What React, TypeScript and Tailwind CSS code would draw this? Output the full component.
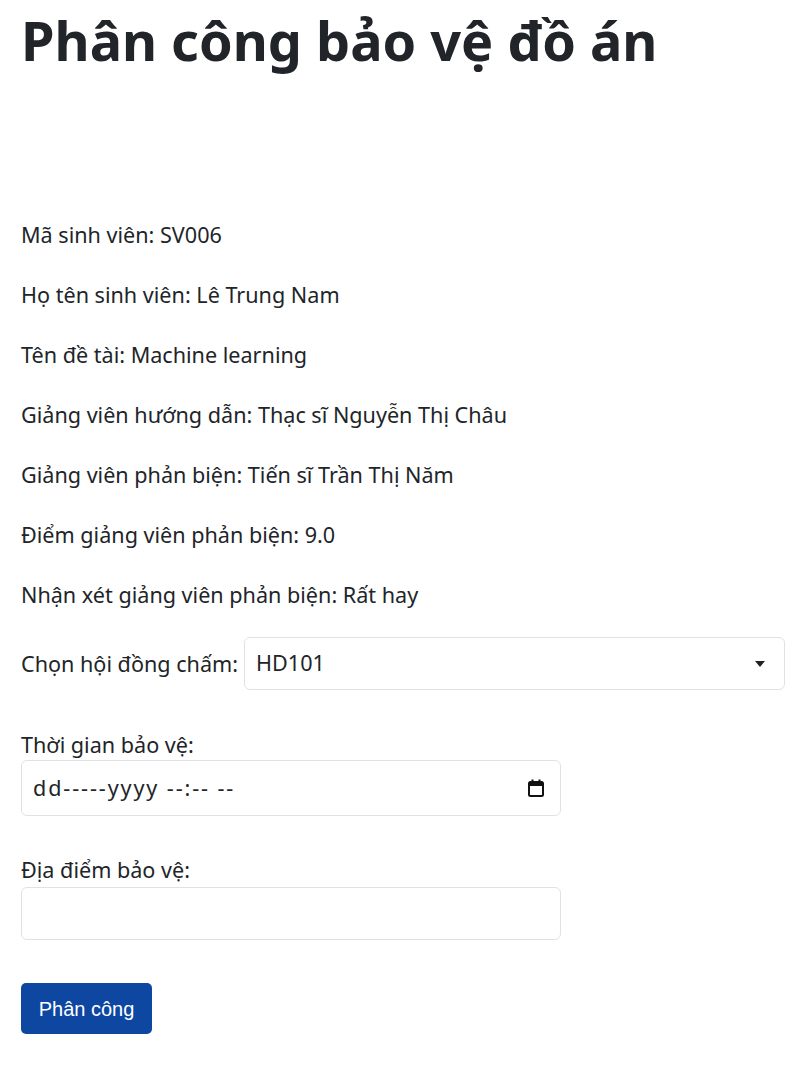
const font = { fontFamily: '"Noto Sans", "Open Sans", sans-serif' };

const rows: [string, string][] = [
  ["Mã sinh viên", "SV006"],
  ["Họ tên sinh viên", "Lê Trung Nam"],
  ["Tên đề tài", "Machine learning"],
  ["Giảng viên hướng dẫn", "Thạc sĩ Nguyễn Thị Châu"],
  ["Giảng viên phản biện", "Tiến sĩ Trần Thị Năm"],
  ["Điểm giảng viên phản biện", "9.0"],
  ["Nhận xét giảng viên phản biện", "Rất hay"],
];

const CalendarIcon = () => (
  <svg width="20" height="20" viewBox="0 0 20 20" fill="none">
    <rect x="3" y="4" width="14" height="14" rx="1.5" stroke="#111" strokeWidth="2" />
    <rect x="3" y="4" width="14" height="4" fill="#111" />
    <rect x="5.5" y="1.5" width="2" height="4" fill="#111" />
    <rect x="12.5" y="1.5" width="2" height="4" fill="#111" />
  </svg>
);

export default function App() {
  return (
    <div className="min-h-[1078px] bg-white pl-[21px] pr-[11px] text-[#212529]" style={font}>
      <h1 className="pt-[7px] text-[54px] font-bold leading-[67px]">
        Phân công bảo vệ đồ án
      </h1>

      <div className="mt-[146px]">
        {rows.map(([k, v]) => (
          <p key={k} className="mb-[30px] text-[21.6px] leading-[30px]">
            {k}: {v}
          </p>
        ))}
      </div>

      <div className="-mt-[3px] flex items-center">
        <label className="mr-[6px] text-[21.6px] leading-[30px]">Chọn hội đồng chấm:</label>
        <div className="flex h-[53px] flex-1 items-center justify-between rounded-[6px] border border-[#dee2e6] pl-[11px] pr-[18px] text-[21.6px]">
          <span>HD101</span>
          <svg width="12" height="8" viewBox="0 0 12 8">
            <path d="M1 1h10L6 7z" fill="#222" />
          </svg>
        </div>
      </div>

      <div className="mt-[40px]">
        <label className="block text-[21.6px] leading-[30px]">Thời gian bảo vệ:</label>
        <div className="flex h-[56px] w-[540px] items-center justify-between rounded-[6px] border border-[#dee2e6] pl-[11px] pr-[14px] text-[21.6px]">
          <span className="tracking-[1.9px]">dd-----yyyy --:-- --</span>
          <CalendarIcon />
        </div>
      </div>

      <div className="mt-[39px]">
        <label className="block text-[21.6px] leading-[30px]">Địa điểm bảo vệ:</label>
        <div className="mt-[2px] h-[53px] w-[540px] rounded-[6px] border border-[#dee2e6]" />
      </div>

      <button
        className="mt-[43px] h-[51px] w-[131px] rounded-[5px] bg-[#0d47a1] text-[20px] text-white"
        style={{ fontFamily: '"Liberation Sans", Arial, sans-serif' }}
      >
        Phân công
      </button>
    </div>
  );
}
